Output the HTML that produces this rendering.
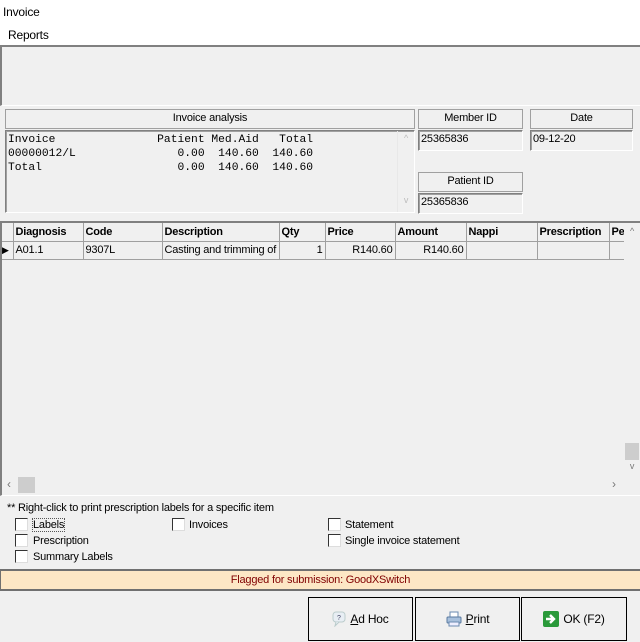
<!DOCTYPE html>
<html><head><style>
*{margin:0;padding:0;box-sizing:border-box}
body{width:640px;height:642px;background:#f0f0f0;font-family:"Liberation Sans",sans-serif;font-size:11px;color:#000;position:relative;overflow:hidden;letter-spacing:-0.2px}
.a{position:absolute}
.hdr{position:absolute;border:1px solid #a0a0a0;background:#f0f0f0;text-align:center;line-height:17px}
.fld{position:absolute;border:1px solid #fff;border-top-color:#808080;border-left-color:#808080;background:#f0f0f0;line-height:16px;padding-left:2px;box-shadow:inset 1px 1px 0 #a0a0a0}
.mono{font-family:"Liberation Mono",monospace;font-size:11.3px;white-space:pre;line-height:14px;letter-spacing:0}
.cb{position:absolute;width:13px;height:13px;border:1px solid #333;background:#fff;border-right-color:#ddd;border-bottom-color:#ddd}
.btn{position:absolute;top:597px;height:44px;border:1px solid #000;background:#f0f0f0;display:flex;align-items:center;justify-content:center;gap:4px;font-size:12px}
table{border-collapse:collapse}
td{border-right:1px solid #a0a0a0;border-bottom:1px solid #a0a0a0;height:18px;padding:0 2px;white-space:nowrap;overflow:hidden}
</style></head><body>
<div class="a" style="left:0;top:0;width:640px;height:45px;background:#fff"></div>
<div class="a" style="left:3px;top:5px;font-size:12px">Invoice</div>
<div class="a" style="left:8px;top:28px;font-size:12px">Reports</div>
<div class="a" style="left:0;top:45px;width:640px;height:61px;border-top:2px solid #808080;border-left:2px solid #808080;border-bottom:1px solid #fff"></div>

<div class="hdr" style="left:5px;top:109px;width:410px;height:20px">Invoice analysis</div>
<div class="fld" style="left:5px;top:130px;width:410px;height:83px;padding:0"></div>
<div class="a mono" style="left:8px;top:133px">Invoice               Patient Med.Aid   Total
00000012/L               0.00  140.60  140.60
Total                    0.00  140.60  140.60</div>
<div class="a" style="left:397px;top:131px;width:17px;height:81px;border-left:1px solid #e8e8e8;color:#bbb;font-size:9px;text-align:center"><div style="margin-top:2px">^</div><div style="margin-top:52px">v</div></div>

<div class="hdr" style="left:418px;top:109px;width:105px;height:20px">Member ID</div>
<div class="fld" style="left:418px;top:130px;width:105px;height:21px">25365836</div>
<div class="hdr" style="left:530px;top:109px;width:103px;height:20px">Date</div>
<div class="fld" style="left:530px;top:130px;width:103px;height:21px">09-12-20</div>
<div class="hdr" style="left:418px;top:172px;width:105px;height:20px">Patient ID</div>
<div class="fld" style="left:418px;top:193px;width:105px;height:21px">25365836</div>

<div class="a" style="left:0;top:221px;width:640px;height:275px;border-top:2px solid #808080;border-left:2px solid #808080;border-bottom:1px solid #fff;overflow:hidden">
<table style="width:622px;table-layout:fixed">
<colgroup><col style="width:11px"><col style="width:70px"><col style="width:79px"><col style="width:117px"><col style="width:46px"><col style="width:70px"><col style="width:71px"><col style="width:71px"><col style="width:72px"><col style="width:15px"></colgroup>
<tr style="font-weight:bold"><td></td><td>Diagnosis</td><td>Code</td><td>Description</td><td>Qty</td><td>Price</td><td>Amount</td><td>Nappi</td><td>Prescription</td><td>Pe</td></tr>
<tr><td style="font-size:9px;padding:0">&#9654;</td><td>A01.1</td><td>9307L</td><td>Casting and trimming of g</td><td style="text-align:right">1</td><td style="text-align:right">R140.60</td><td style="text-align:right">R140.60</td><td></td><td></td><td></td></tr>
</table>
<div class="a" style="left:622px;top:0;width:16px;height:252px;background:#f0f0f0;color:#777;font-size:9px;text-align:center"><div style="margin-top:3px">^</div><div class="a" style="left:1px;top:220px;width:14px;height:17px;background:#cdcdcd"></div><div class="a" style="left:0;top:238px;width:16px">v</div></div>
<div class="a" style="left:0;top:252px;width:622px;height:20px;color:#777;font-size:12px"><span class="a" style="left:5px;top:2px">&lsaquo;</span><div class="a" style="left:16px;top:2px;width:17px;height:16px;background:#cdcdcd"></div><span class="a" style="left:610px;top:2px">&rsaquo;</span></div>
</div>

<div class="a" style="left:7px;top:502px">** Right-click to print prescription labels for a specific item</div>
<div class="cb" style="left:15px;top:518px"></div><div class="a" style="left:33px;top:519px;outline:1px dotted #555">Labels</div>
<div class="cb" style="left:15px;top:534px"></div><div class="a" style="left:33px;top:535px">Prescription</div>
<div class="cb" style="left:15px;top:550px"></div><div class="a" style="left:33px;top:551px">Summary Labels</div>
<div class="cb" style="left:172px;top:518px"></div><div class="a" style="left:189px;top:519px">Invoices</div>
<div class="cb" style="left:328px;top:518px"></div><div class="a" style="left:345px;top:519px">Statement</div>
<div class="cb" style="left:328px;top:534px"></div><div class="a" style="left:345px;top:535px">Single invoice statement</div>

<div class="a" style="left:0;top:569px;width:640px;height:22px;background:#fde7c5;border-top:2px solid #707070;border-bottom:2px solid #707070;border-left:1px solid #707070;color:#800000;text-align:center;line-height:18px">Flagged for submission: GoodXSwitch</div>

<div class="btn" style="left:308px;width:105px"><svg width="14" height="16"><rect x="1" y="1" width="12" height="10" rx="3" fill="#e8eef4" stroke="#bcc"/><path d="M4 11l-1 4 4-4" fill="#e8eef4" stroke="#bcc"/><text x="5" y="9" font-size="7" fill="#446">?</text></svg><span><u>A</u>d Hoc</span></div>
<div class="btn" style="left:415px;width:105px"><svg width="16" height="16"><rect x="4" y="1" width="8" height="6" fill="#fff" stroke="#6a8ab0"/><rect x="1" y="6" width="14" height="6" rx="1" fill="#a8c0dc" stroke="#5a7aa0"/><rect x="3" y="11" width="10" height="4" fill="#eef" stroke="#6a8ab0"/></svg><span><u>P</u>rint</span></div>
<div class="btn" style="left:521px;width:106px"><svg width="16" height="16"><rect x="0" y="0" width="16" height="16" rx="2" fill="#2a9a3a"/><path d="M3 8h7M7 4l4 4-4 4" stroke="#fff" stroke-width="2.4" fill="none"/></svg><span>OK (F2)</span></div>
</body></html>
